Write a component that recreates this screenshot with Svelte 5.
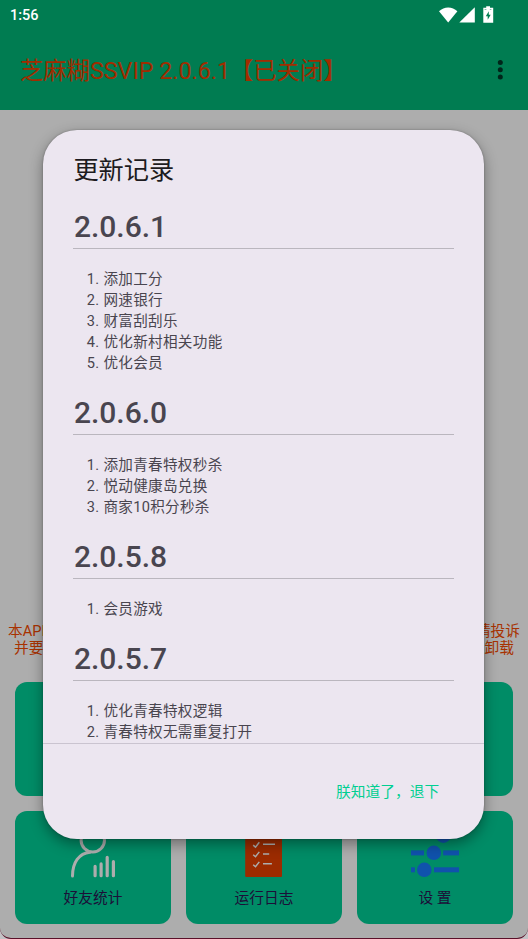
<script lang="ts">
  type Release = { version: string; notes: string[] };

  const releases: Release[] = [
    { version: '2.0.6.1', notes: ['添加工分', '网速银行', '财富刮刮乐', '优化新村相关功能', '优化会员'] },
    { version: '2.0.6.0', notes: ['添加青春特权秒杀', '悦动健康岛兑换', '商家10积分秒杀'] },
    { version: '2.0.5.8', notes: ['会员游戏'] },
    { version: '2.0.5.7', notes: ['优化青春特权逻辑', '青春特权无需重复打开'] },
  ];
</script>

<div class="screen">
  <header>
    <div class="status-bar">
      <span class="clock">1:56</span>
      <svg class="status-icons" width="58" height="18" viewBox="0 0 58 18" fill="#fff">
        <path d="M0 5.2C5.1 0.1 13.3 0.1 18.4 5.2L9.2 16.4z" />
        <path d="M35.8 1.2V16.6H20.3z" />
        <path d="M47.2 0.2h3.8v1.6h3.2v15H44.3v-15h2.9z" />
        <path d="M45.6 3.5h1.8M50.8 3.5h1.6" stroke="#007c51" stroke-width="0.8" opacity="0.6" />
        <path d="M49.8 5.2v3.5h1.9l-3 5.1v-3.6h-1.9z" fill="#007c51" />
      </svg>
    </div>
    <div class="toolbar">
      <h1>芝麻糊SSVIP 2.0.6.1【已关闭】</h1>
      <svg class="more" width="6" height="20" viewBox="0 0 6 20">
        <circle cx="3.3" cy="2.5" r="2.5" />
        <circle cx="3.3" cy="9.8" r="2.5" />
        <circle cx="3.3" cy="17.1" r="2.5" />
      </svg>
    </div>
  </header>

  <main>
    <div class="notice">
      <div class="line"><span>本API</span><span>请投诉</span></div>
      <div class="line inner"><span>并要</span><span>卸载</span></div>
    </div>
    <div class="cards">
      <div class="card"></div>
      <div class="card"></div>
      <div class="card"></div>
      <div class="card">
        <svg width="50" height="50" viewBox="0 0 50 50" fill="none" stroke="#adadad" stroke-width="3">
          <circle cx="24.8" cy="12.2" r="11.7" />
          <path d="M4.5 48C4.5 34.5 11 25.2 22 24.2" stroke-linecap="round" />
          <path d="M27.1 38.4v9.3M33.1 35.9v11.8M39.2 29.4v18.3M45.4 33.7v14" stroke-linecap="round" stroke-width="3.2" />
        </svg>
        <span>好友统计</span>
      </div>
      <div class="card">
        <svg width="50" height="50" viewBox="0 0 50 50">
          <rect x="6.2" y="0" width="36.8" height="49" rx="1" fill="#9c2b00" />
          <g fill="none" stroke="#adadad" stroke-width="1.5">
            <path d="M14.2 17.1l2.3 2 3.8-4.8M14.2 26.7l2.3 2 3.8-4.8M14.2 36.7l2.3 2 3.8-4.8" />
            <path d="M24 16.2h12M24 26h6.2M24 35.8h8.9" />
          </g>
        </svg>
        <span>运行日志</span>
      </div>
      <div class="card">
        <svg width="50" height="50" viewBox="0 0 50 50" fill="#1052ac">
          <rect x="1" y="5.2" width="22" height="5" />
          <circle cx="33.4" cy="7.7" r="7.3" />
          <rect x="43" y="5.2" width="6" height="5" />
          <rect x="1" y="22.4" width="13" height="5" />
          <circle cx="23.8" cy="24.8" r="7.3" />
          <rect x="33.2" y="22.4" width="15.8" height="5" />
          <rect x="1" y="39.3" width="3.9" height="5" />
          <circle cx="14.3" cy="41.8" r="7.3" />
          <rect x="24" y="39.3" width="25" height="5" />
        </svg>
        <span>设 置</span>
      </div>
    </div>
  </main>

  <div class="dialog" role="dialog" aria-label="更新记录">
    <h2>更新记录</h2>
    <div class="changelog">
      {#each releases as release (release.version)}
        <section>
          <h3>{release.version}</h3>
          <ol>
            {#each release.notes as note}
              <li>{note}</li>
            {/each}
          </ol>
        </section>
      {/each}
    </div>
    <div class="actions">
      <button type="button">朕知道了，退下</button>
    </div>
  </div>
</div>

<style>
  :global(body) {
    background: #c4c2c5;
  }

  .screen {
    position: relative;
    box-sizing: border-box;
    width: 528px;
    height: 939px;
    overflow: hidden;
    display: flex;
    flex-direction: column;
    background: #adadad;
    border-bottom: 1.5px solid #5a1029;
    border-radius: 0 0 11px 11px;
    font-family: Roboto, 'Noto Sans CJK SC', sans-serif;
  }

  header {
    flex: none;
    height: 109.5px;
    background: #007c51;
  }

  .status-bar {
    box-sizing: border-box;
    height: 30px;
    padding: 0 31px 0 10px;
    display: flex;
    align-items: center;
    justify-content: space-between;
    color: #fff;
  }

  .clock {
    padding-top: 2px;
    font-size: 14.5px;
    font-weight: 500;
    line-height: 28px;
  }

  .toolbar {
    height: 80px;
    padding: 0 25px 0 20px;
    display: flex;
    align-items: center;
    justify-content: space-between;
  }

  h1 {
    margin: 0;
    padding-top: 2px;
    font-size: 23.3px;
    font-weight: 400;
    line-height: 34px;
    white-space: nowrap;
    color: #a02d00;
  }

  .more {
    fill: #00251a;
  }

  main {
    flex: 1;
    display: flex;
    flex-direction: column;
    justify-content: flex-end;
    padding: 0 15px 14.5px;
  }

  .notice {
    margin: 0 -7px 25px;
    font-size: 14.7px;
    line-height: 17px;
    color: #a83200;
  }

  .line {
    display: flex;
    justify-content: space-between;
  }

  .inner {
    padding: 0 6px;
  }

  .cards {
    display: grid;
    grid-template-columns: repeat(3, 1fr);
    grid-template-rows: 114px 113px;
    gap: 15px;
  }

  .card {
    box-sizing: border-box;
    padding-top: 17px;
    display: flex;
    flex-direction: column;
    align-items: center;
    gap: 10px;
    border-radius: 12px;
    background: #008c66;
    color: #1c0f38;
    font-size: 14.7px;
    line-height: 20px;
  }

  .dialog {
    position: absolute;
    top: 129.5px;
    left: 43.4px;
    width: 441px;
    height: 709.5px;
    display: flex;
    flex-direction: column;
    overflow: hidden;
    border-radius: 34px;
    background: #ece6f0;
    box-shadow: 0 5px 14px rgba(0, 0, 0, 0.38), 0 0 2px rgba(0, 0, 0, 0.3);
  }

  h2 {
    flex: none;
    margin: 0;
    padding: 23px 30px 0;
    font-size: 25.2px;
    font-weight: 400;
    line-height: 36px;
    color: #1d1b20;
  }

  .changelog {
    flex: 1;
    min-height: 0;
    overflow: hidden;
    padding: 17px 30px 0;
    color: #49454f;
  }

  section {
    margin-bottom: 17.5px;
  }

  h3 {
    margin: 0 0 20.5px;
    padding-left: 0.5px;
    border-bottom: 1.5px solid #bab6be;
    font-size: 30px;
    font-weight: 500;
    line-height: 42px;
  }

  ol {
    margin: 0;
    padding-left: 30px;
    font-size: 14.6px;
    line-height: 21px;
    letter-spacing: 0.3px;
  }

  .actions {
    flex: none;
    box-sizing: border-box;
    height: 96px;
    padding: 1px 45px 0;
    display: flex;
    align-items: center;
    justify-content: flex-end;
    border-top: 1px solid #cac4d0;
  }

  button {
    padding: 0;
    border: 0;
    background: none;
    font: inherit;
    font-size: 14.7px;
    line-height: 20px;
    letter-spacing: 0.1px;
    color: #00cf91;
  }
</style>
